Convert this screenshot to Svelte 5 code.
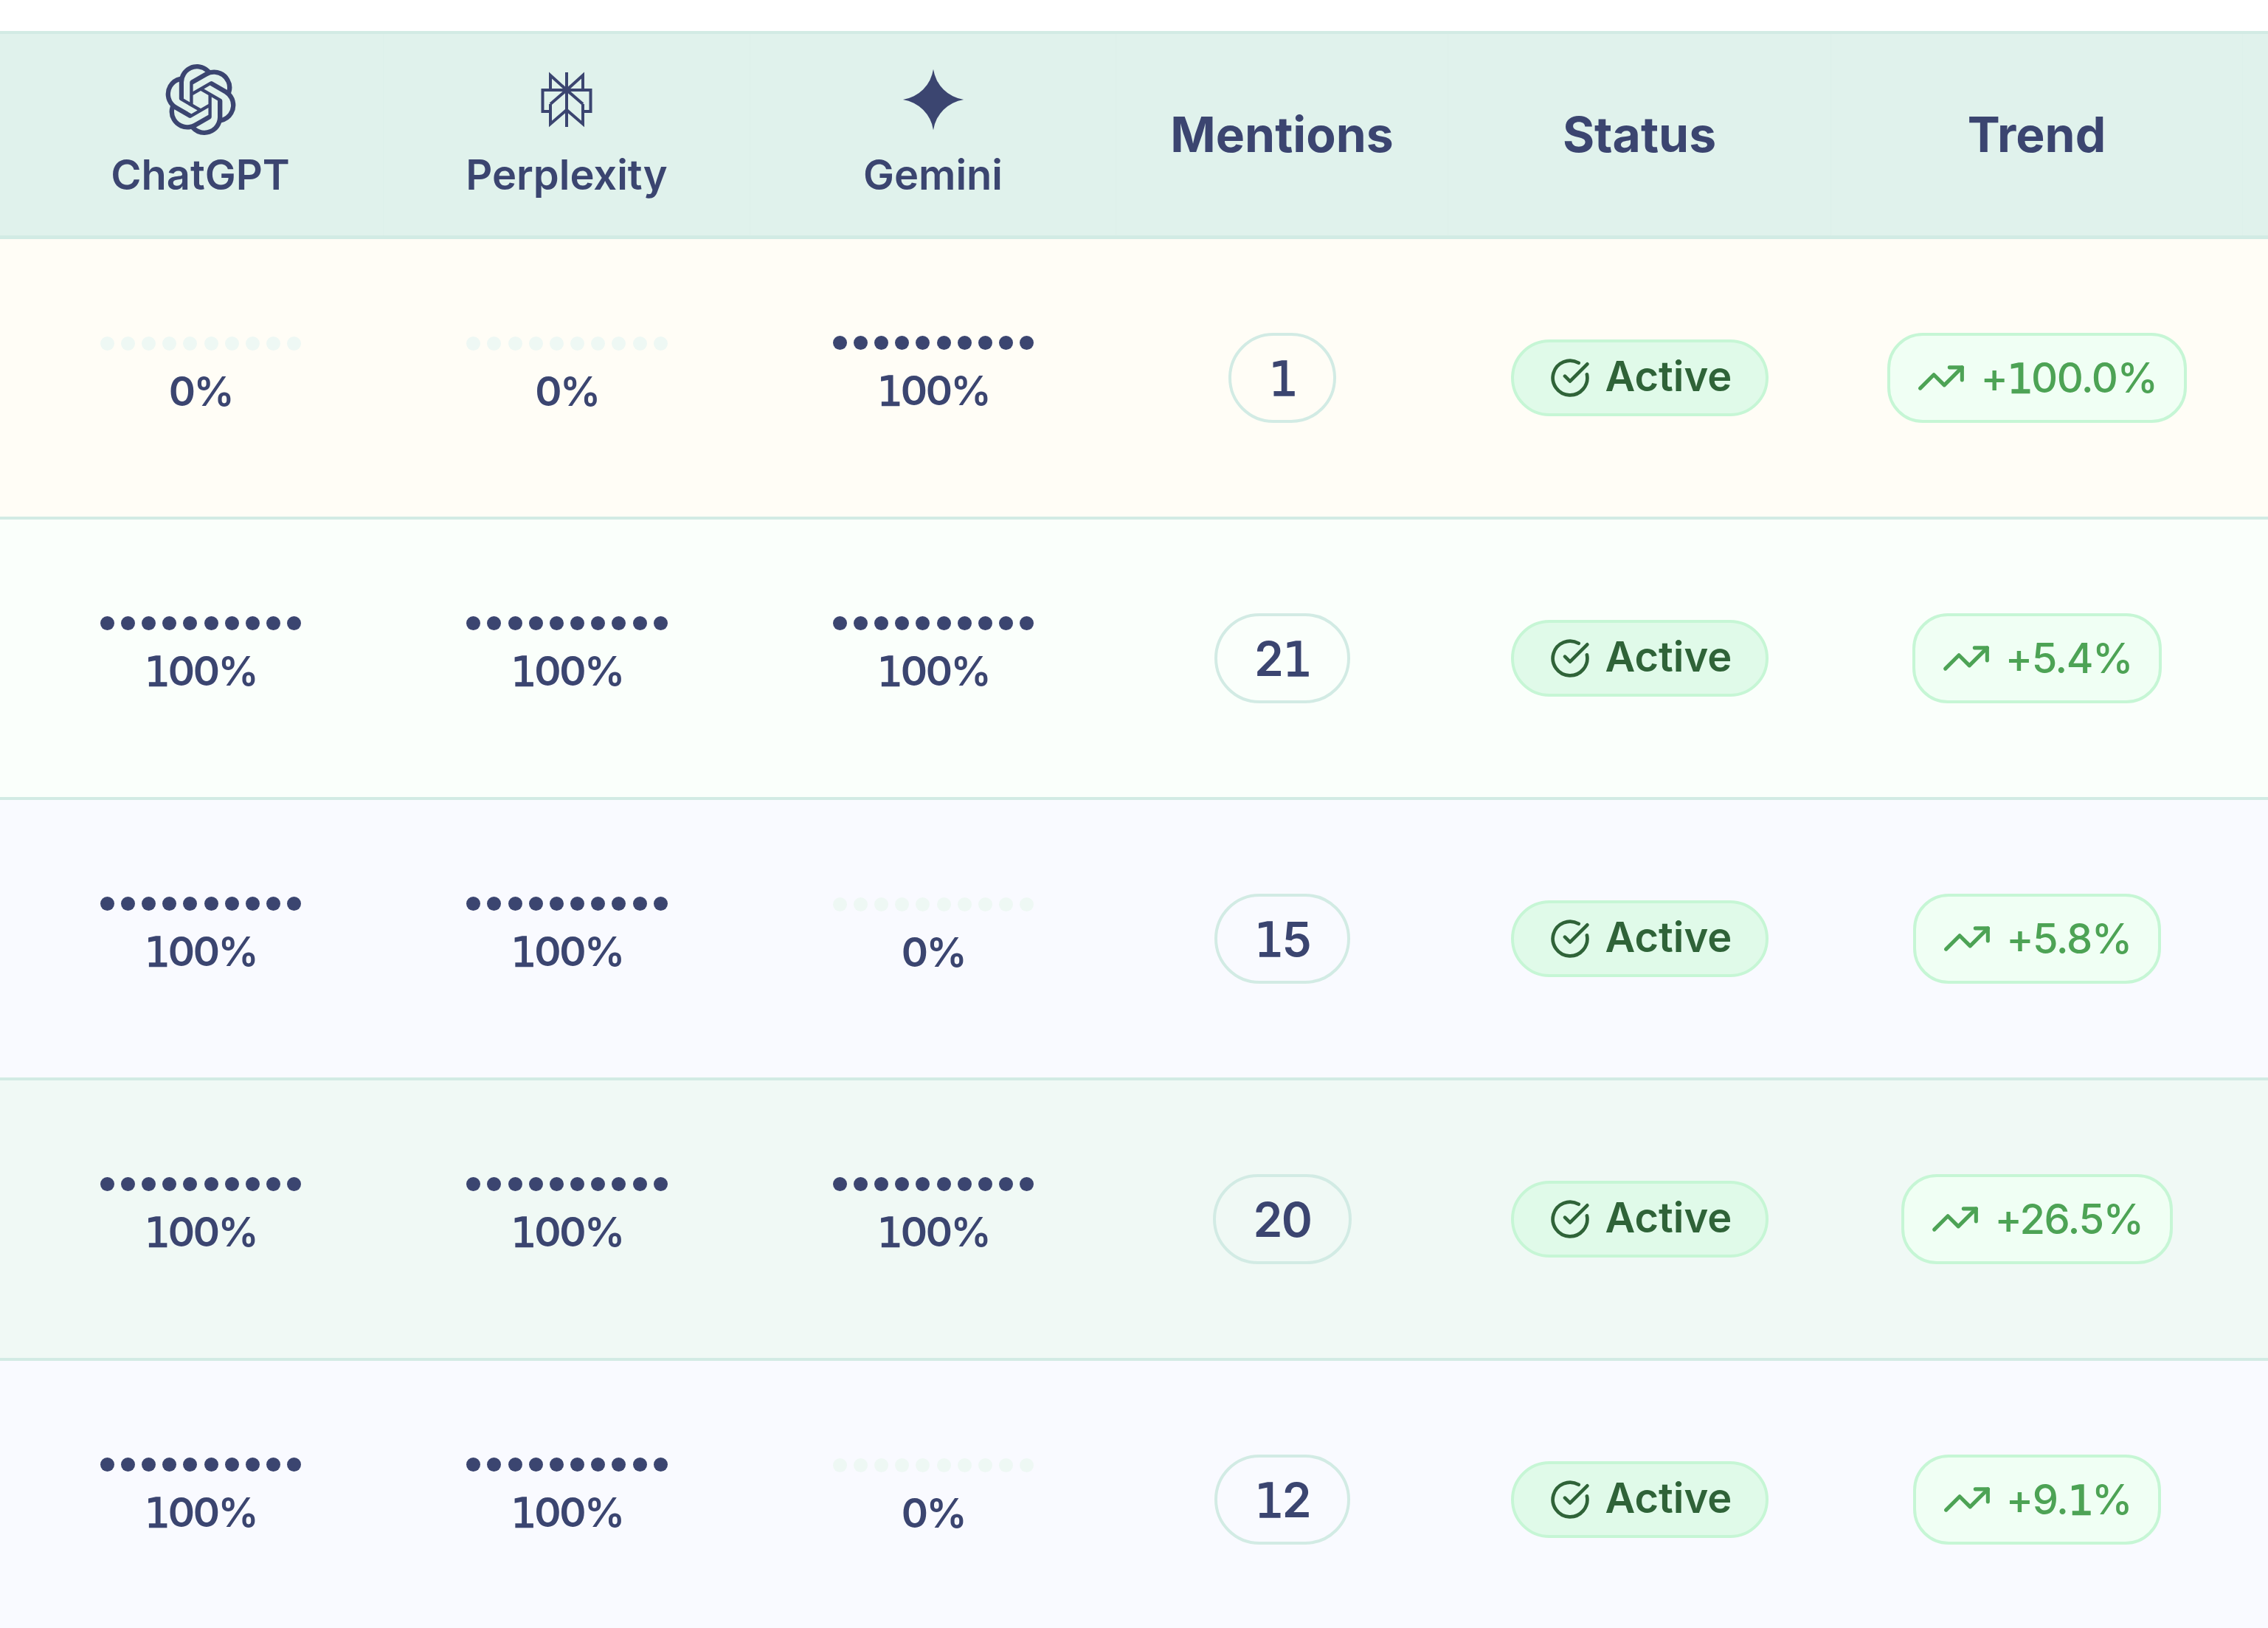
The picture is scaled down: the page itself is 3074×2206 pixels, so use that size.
<script>
  const navy = '#3b4570';
  const rows = [
    { bg: '#fffdf6', vals: [0, 0, 100], m: 1, t: '+100.0%' },
    { bg: '#fafffb', vals: [100, 100, 100], m: 21, t: '+5.4%' },
    { bg: '#f9faff', vals: [100, 100, 0], m: 15, t: '+5.8%' },
    { bg: '#f0f9f5', vals: [100, 100, 100], m: 20, t: '+26.5%' },
    { bg: '#f9faff', vals: [100, 100, 0], m: 12, t: '+9.1%' }
  ];
  const dots = Array.from({ length: 10 });
  const parts = (v) => String(v).split(/(1)/).filter(Boolean);
</script>

{#snippet num(v)}{#each parts(v) as p}{#if p === '1'}<span class="one">1</span>{:else}{p}{/if}{/each}{/snippet}

<div class="page">
  <div class="head">
    <div class="th stack">
      <svg class="ico" viewBox="0 0 24 24"><path fill={navy} d="M22.2819 9.8211a5.9847 5.9847 0 0 0-.5157-4.9108 6.0462 6.0462 0 0 0-6.5098-2.9A6.0651 6.0651 0 0 0 4.9807 4.1818a5.9847 5.9847 0 0 0-3.9977 2.9 6.0462 6.0462 0 0 0 .7427 7.0966 5.98 5.98 0 0 0 .511 4.9107 6.051 6.051 0 0 0 6.5146 2.9001A5.9847 5.9847 0 0 0 13.2599 24a6.0557 6.0557 0 0 0 5.7718-4.2058 5.9894 5.9894 0 0 0 3.9977-2.9001 6.0557 6.0557 0 0 0-.7475-7.0729zm-9.022 12.6081a4.4755 4.4755 0 0 1-2.8764-1.0408l.1419-.0804 4.7783-2.7582a.7948.7948 0 0 0 .3927-.6813v-6.7369l2.02 1.1686a.071.071 0 0 1 .038.052v5.5826a4.504 4.504 0 0 1-4.4945 4.4944zm-9.6607-4.1254a4.4708 4.4708 0 0 1-.5346-3.0137l.142.0852 4.783 2.7582a.7712.7712 0 0 0 .7806 0l5.8428-3.3685v2.3324a.0804.0804 0 0 1-.0332.0615L9.74 19.9502a4.4992 4.4992 0 0 1-6.1408-1.6464zM2.3408 7.8956a4.485 4.485 0 0 1 2.3655-1.9728V11.6a.7664.7664 0 0 0 .3879.6765l5.8144 3.3543-2.0201 1.1685a.0757.0757 0 0 1-.071 0l-4.8303-2.7865A4.504 4.504 0 0 1 2.3408 7.872zm16.5963 3.8558L13.1038 8.364 15.1192 7.2a.0757.0757 0 0 1 .071 0l4.8303 2.7913a4.4944 4.4944 0 0 1-.6765 8.1042v-5.6772a.79.79 0 0 0-.407-.667zm2.0107-3.0231l-.142-.0852-4.7735-2.7818a.7759.7759 0 0 0-.7854 0L9.409 9.2297V6.8974a.0662.0662 0 0 1 .0284-.0615l4.8303-2.7866a4.4992 4.4992 0 0 1 6.6802 4.66zM8.3065 12.863l-2.02-1.1638a.0804.0804 0 0 1-.038-.0567V6.0742a4.4992 4.4992 0 0 1 7.3757-3.4537l-.142.0805L8.704 5.459a.7948.7948 0 0 0-.3927.6813zm1.0976-2.3654l2.602-1.4998 2.6069 1.4998v2.9994l-2.5974 1.4997-2.6067-1.4997Z"/></svg>
      <span class="lab">ChatGPT</span>
    </div>
    <div class="th stack">
      <svg class="ico" viewBox="21 18 96 96" fill="none" stroke={navy} stroke-width="4"><path d="M69 29V103M47 53H36.500V82H47M91 53H101.500V82H91M47 53V33L69 53L91 33V53M36.500 53H101.500M47 72L69 53L91 72M47 72V99L69 80L91 99V72"/></svg>
      <span class="lab">Perplexity</span>
    </div>
    <div class="th stack">
      <svg class="ico" viewBox="-2 -2 28 28"><path fill={navy} d="M12 24A14.304 14.304 0 0 0 0 12 14.304 14.304 0 0 0 12 0a14.304 14.304 0 0 0 12 12 14.304 14.304 0 0 0-12 12"/></svg>
      <span class="lab">Gemini</span>
    </div>
    <div class="th big">Mentions</div>
    <div class="th big">Status</div>
    <div class="th big">Trend</div>
  </div>

  {#each rows as r}
    <div class="row" style="background:{r.bg}">
      {#each r.vals as v}
        <div class="cell stack score">
          <div class="dots">
            {#each dots as _}<i class:on={v === 100}></i>{/each}
          </div>
          <span class="pct">{@render num(v + '%')}</span>
        </div>
      {/each}
      <div class="cell"><span class="count"><span>{@render num(r.m)}</span></span></div>
      <div class="cell">
        <span class="active">
          <svg viewBox="0 0 24 24" fill="none" stroke="#2f6338" stroke-width="2" stroke-linecap="round" stroke-linejoin="round"><path d="M21.801 10A10 10 0 1 1 17 3.335"/><path d="m9 11 3 3L22 4"/></svg>
          <span class="atext">Active</span>
        </span>
      </div>
      <div class="cell">
        <span class="trend">
          <svg viewBox="0 0 24 24" fill="none" stroke="#4da355" stroke-width="1.800" stroke-linecap="round" stroke-linejoin="round"><path d="M22 7 13.500 15.500 8.500 10.500 2 17"/><path d="M16 7h6v6"/></svg>
          <span class="ttext">{@render num(r.t)}</span>
        </span>
      </div>
    </div>
  {/each}
</div>

<style>
  :global(body) { margin: 0; background: #fff; }
  .page {
    height: 2206px;
    overflow: hidden;
    padding-top: 42px;
    box-sizing: border-box;
    font-family: Inter, "Liberation Sans", sans-serif;
    color: #3b4570;
  }
  .head, .row {
    display: grid;
    grid-template-columns: 496px 497px 496px 450px 519px 558px;
    padding: 0 34px 0 24px;
    box-sizing: border-box;
  }
  .head {
    height: 282px;
    background: #e0f2ec;
    border-top: 4px solid #d2ebe4;
    border-bottom: 5px solid #d2ebe4;
  }
  .row {
    height: 380px;
    border-bottom: 4px solid #d2ebe4;
  }
  .th, .cell {
    display: flex;
    align-items: center;
    justify-content: center;
  }
  .th { border-right: 1px solid #ddf0ea; }
  .stack { flex-direction: column; }
  .ico { width: 96px; height: 96px; display: block; }
  .lab { font-size: 56px; font-weight: 600; line-height: 84px; margin-top: 12px; }
  .big { font-size: 66px; font-weight: 700; padding-bottom: 2px; }
  .score { gap: 13px; padding-top: 3px; }
  .dots { display: flex; gap: 9.200px; }
  .dots i { width: 19px; height: 19px; border-radius: 50%; background: #eef8f4; }
  .dots i.on { background: #3b4570; }
  .one {
    font-family: "DejaVu Sans", sans-serif;
    font-weight: 400;
    -webkit-text-stroke: 1.400px currentColor;
    letter-spacing: -3px;
  }
  .pct {
    font-size: 55px;
    font-weight: 600;
    letter-spacing: -2.500px;
    line-height: 84px;
  }
  .count {
    display: inline-flex;
    align-items: center;
    height: 122px;
    box-sizing: border-box;
    font-size: 64px;
    font-weight: 600;
    letter-spacing: -1.500px;
    padding: 0 50px;
    border: 4px solid #d2ebe4;
    border-radius: 61px;
  }
  .active {
    display: inline-flex;
    align-items: center;
    gap: 20px;
    padding: 0 46px 0 48px;
    height: 104px;
    box-sizing: border-box;
    border: 4px solid #c6f6d5;
    border-radius: 52px;
    background: #e0fae9;
    color: #2f6338;
    font-size: 56px;
    font-weight: 600;
  }
  .active svg { width: 56px; height: 56px; }
  .atext { padding-bottom: 4px; }
  .trend {
    display: inline-flex;
    align-items: center;
    gap: 19px;
    height: 122px;
    padding: 0 36px 0 35px;
    box-sizing: border-box;
    border: 4px solid #c6f6d5;
    border-radius: 48px;
    background: #f0fff4;
    color: #4da355;
    font-size: 56px;
    font-weight: 500;
  }
  .ttext { letter-spacing: -1.500px; }
  .trend svg { width: 68px; height: 68px; }
</style>
